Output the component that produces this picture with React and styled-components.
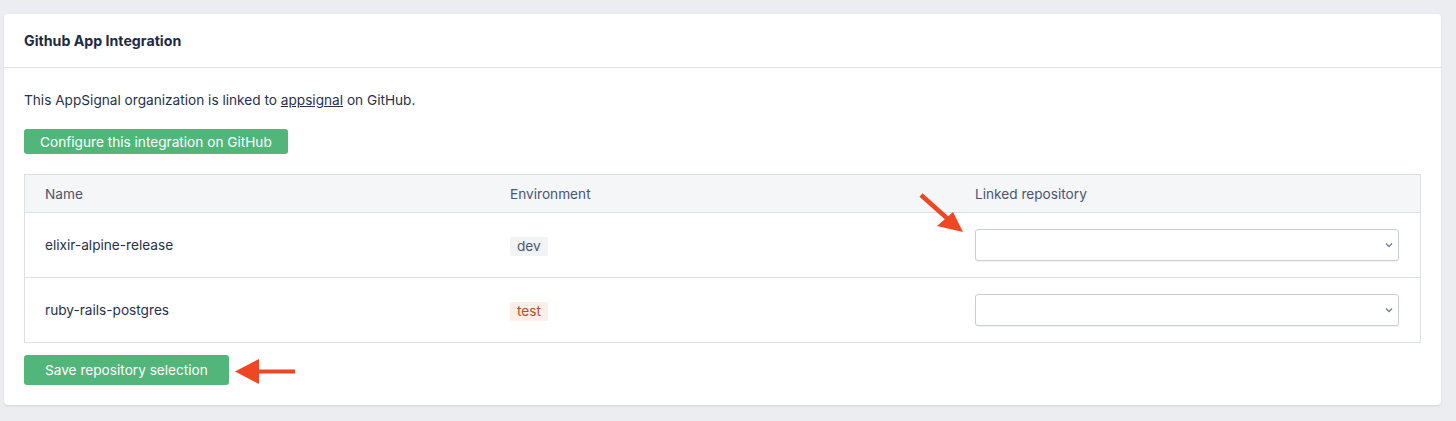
import React from 'react';
import styled, { createGlobalStyle } from 'styled-components';

const GlobalStyle = createGlobalStyle`
  html, body {
    margin: 0;
    padding: 0;
    background: #ecedf1;
  }
  body {
    font-family: Inter, "Noto Sans", sans-serif;
    font-size: 13.65px;
    color: #1f2a44;
  }
`;

const Page = styled.div`
  padding: 14px 15px 16px 4px;
`;

const Card = styled.section`
  position: relative;
  background: #fff;
  border-radius: 4px;
  box-shadow: 0 1px 2px rgba(30, 40, 70, 0.12);
`;

const CardHeader = styled.header`
  height: 53px;
  display: flex;
  align-items: center;
  padding: 0 20px;
  border-bottom: 1px solid #dfe1e7;
`;

const Title = styled.h2`
  margin: 0;
  font-size: 14.2px;
  font-weight: 700;
  color: #1f2a44;
`;

const CardBody = styled.div`
  padding: 23px 20px 20px;
`;

const Intro = styled.p`
  margin: 0 0 20px;
  line-height: 18px;
  color: #27314d;
`;

const Link = styled.a`
  color: inherit;
  text-decoration: underline;
`;

const Button = styled.button`
  display: inline-flex;
  align-items: center;
  height: ${p => p.$tall ? '30px' : '25px'};
  padding: 0 ${p => p.$tall ? '21px' : '16px'};
  border: 0;
  border-radius: 3px;
  background: #52b67a;
  color: #fff;
  font-family: inherit;
  font-size: 13.65px;
`;

const Table = styled.div`
  margin-top: 20px;
  border: 1px solid #dcdfe8;
`;

const Row = styled.div`
  display: grid;
  grid-template-columns: 465px 465px 1fr;
  height: ${p => p.$head ? '37px' : '64px'};
  align-items: center;
  background: ${p => p.$head ? '#f5f6f8' : '#fff'};
  & + & {
    border-top: 1px solid #dcdfe8;
  }
`;

const Cell = styled.div`
  padding: 0 21px 0 20px;
  color: ${p => p.$head ? '#4a5570' : '#27314d'};
`;

const Badge = styled.span`
  display: inline-block;
  margin-top: 3px;
  padding: 2px 7px;
  border-radius: 2px;
  line-height: 15px;
  background: ${p => p.$tone === 'test' ? '#fcefe9' : '#f2f3f6'};
  color: ${p => p.$tone === 'test' ? '#b04f2b' : '#4a5570'};
`;

const SelectWrap = styled.div`
  position: relative;
  width: 424px;
`;

const Select = styled.select`
  display: block;
  width: 100%;
  height: 32px;
  appearance: none;
  border: 1px solid #c9cdd7;
  border-radius: 3px;
  background: #fff;
  box-shadow: 0 1px 1px rgba(30, 40, 70, 0.06);
`;

const Chevron = styled.svg`
  position: absolute;
  right: 6px;
  top: 13px;
  pointer-events: none;
`;

const Footer = styled.div`
  margin-top: 12px;
`;

const Arrow = styled.svg`
  position: absolute;
  left: ${p => p.$x}px;
  top: ${p => p.$y}px;
  overflow: visible;
`;

const rows = [
  { name: 'elixir-alpine-release', env: 'dev' },
  { name: 'ruby-rails-postgres', env: 'test' },
];

export default function App() {
  return (
    <>
      <GlobalStyle />
      <Page>
        <Card>
          <CardHeader>
            <Title>Github App Integration</Title>
          </CardHeader>
          <CardBody>
            <Intro>
              This AppSignal organization is linked to <Link href="#">appsignal</Link> on GitHub.
            </Intro>
            <Button>Configure this integration on GitHub</Button>
            <Table>
              <Row $head>
                <Cell $head>Name</Cell>
                <Cell $head>Environment</Cell>
                <Cell $head>Linked repository</Cell>
              </Row>
              {rows.map(r => (
                <Row key={r.name}>
                  <Cell>{r.name}</Cell>
                  <Cell><Badge $tone={r.env}>{r.env}</Badge></Cell>
                  <Cell>
                    <SelectWrap>
                      <Select defaultValue="">
                        <option value=""></option>
                      </Select>
                      <Chevron width="8" height="6" viewBox="0 0 8 6">
                        <path d="M1 1.5 L4 4.5 L7 1.5" fill="none" stroke="#7a8398" strokeWidth="1.5" />
                      </Chevron>
                    </SelectWrap>
                  </Cell>
                </Row>
              ))}
            </Table>
            <Footer>
              <Button $tall>Save repository selection</Button>
            </Footer>
          </CardBody>

          <Arrow $x={913} $y={178} width="48" height="42" viewBox="0 0 48 42">
            <line x1="4" y1="3" x2="32" y2="28" stroke="#ef4623" strokeWidth="4.5" />
            <polygon points="46,40 20,34 36,20" fill="#ef4623" />
          </Arrow>
          <Arrow $x={231} $y={345} width="62" height="26" viewBox="0 0 62 26">
            <line x1="22" y1="12.5" x2="60" y2="12.5" stroke="#ef4623" strokeWidth="4" />
            <polygon points="0,12.5 24,0 24,25" fill="#ef4623" />
          </Arrow>
        </Card>
      </Page>
    </>
  );
}
